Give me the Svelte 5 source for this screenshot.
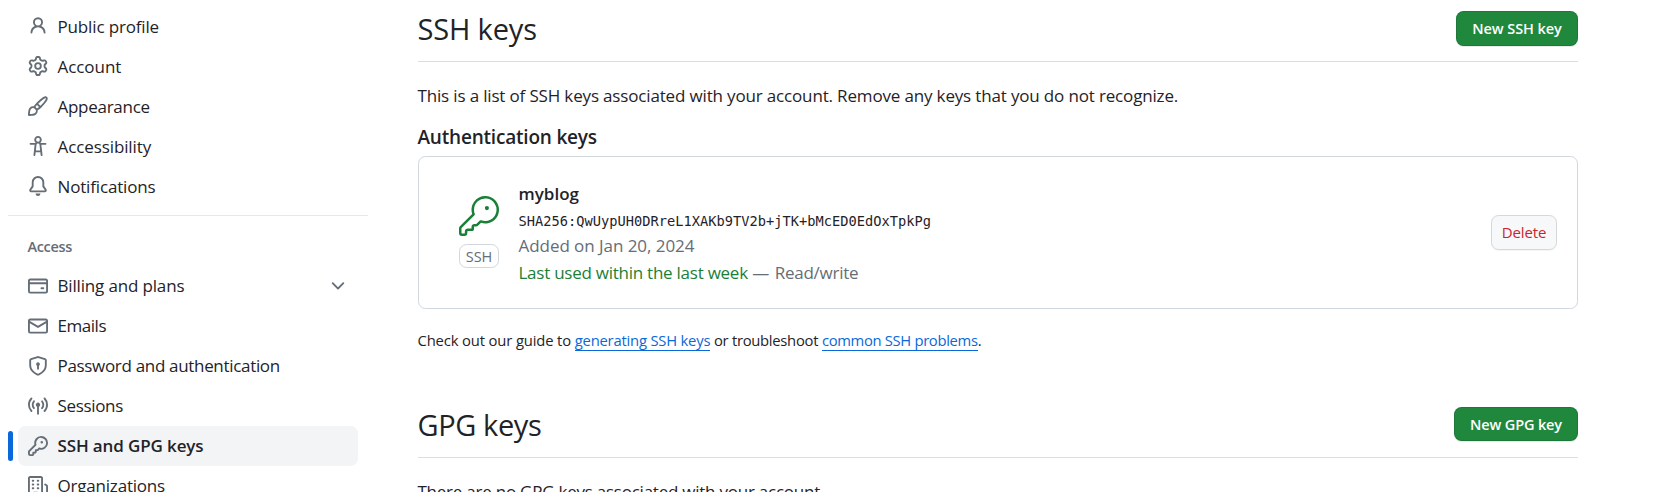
<script>
  const icons = {
    person: 'M10.561 8.073a6.005 6.005 0 0 1 3.432 5.142.75.75 0 1 1-1.498.07 4.5 4.5 0 0 0-8.99 0 .75.75 0 0 1-1.498-.07 6.004 6.004 0 0 1 3.431-5.142 3.999 3.999 0 1 1 5.123 0ZM10.5 5a2.5 2.5 0 1 0-5 0 2.5 2.5 0 0 0 5 0Z',
    gear: 'M8 0a8.2 8.2 0 0 1 .701.031C9.444.095 9.99.645 10.16 1.29l.288 1.107c.018.066.079.158.212.224.231.114.454.243.668.386.123.082.233.09.299.071l1.103-.303c.644-.176 1.392.021 1.82.63.27.385.506.792.704 1.218.315.675.111 1.422-.364 1.891l-.814.806c-.049.048-.098.147-.088.294.016.257.016.515 0 .772-.01.147.038.246.088.294l.814.806c.475.469.679 1.216.364 1.891a7.977 7.977 0 0 1-.704 1.217c-.428.61-1.176.807-1.82.63l-1.102-.302c-.067-.019-.177-.011-.3.071a5.909 5.909 0 0 1-.668.386c-.133.066-.194.158-.211.224l-.29 1.106c-.168.646-.715 1.196-1.458 1.26a8.006 8.006 0 0 1-1.402 0c-.743-.064-1.289-.614-1.458-1.26l-.289-1.106c-.018-.066-.079-.158-.212-.224a5.738 5.738 0 0 1-.668-.386c-.123-.082-.233-.09-.299-.071l-1.103.303c-.644.176-1.392-.021-1.82-.63a8.12 8.12 0 0 1-.704-1.218c-.315-.675-.111-1.422.363-1.891l.815-.806c.05-.048.098-.147.088-.294a6.214 6.214 0 0 1 0-.772c.01-.147-.038-.246-.088-.294l-.815-.806C.635 6.045.431 5.298.746 4.623a7.92 7.92 0 0 1 .704-1.217c.428-.61 1.176-.807 1.82-.63l1.102.302c.067.019.177.011.3-.071.214-.143.437-.272.668-.386.133-.066.194-.158.211-.224l.29-1.106C6.009.645 6.556.095 7.299.03 7.53.01 7.764 0 8 0Zm-.571 1.525c-.036.003-.108.036-.137.146l-.289 1.105c-.147.561-.549.967-.998 1.189-.173.086-.34.183-.5.29-.417.278-.97.423-1.529.27l-1.103-.303c-.109-.03-.175.016-.195.045-.22.312-.412.644-.573.99-.014.031-.021.11.059.19l.815.806c.411.406.562.957.53 1.456a4.709 4.709 0 0 0 0 .582c.032.499-.119 1.05-.53 1.456l-.815.806c-.081.08-.073.159-.059.19.162.346.353.677.573.989.02.03.085.076.195.046l1.102-.303c.56-.153 1.113-.008 1.53.27.161.107.328.204.501.29.447.222.85.629.997 1.189l.289 1.105c.029.109.101.143.137.146a6.6 6.6 0 0 0 1.142 0c.036-.003.108-.036.137-.146l.289-1.105c.147-.561.549-.967.998-1.189.173-.086.34-.183.5-.29.417-.278.97-.423 1.529-.27l1.103.303c.109.029.175-.016.195-.045.22-.313.411-.644.573-.99.014-.031.021-.11-.059-.19l-.815-.806c-.411-.406-.562-.957-.53-1.456a4.709 4.709 0 0 0 0-.582c-.032-.499.119-1.05.53-1.456l.815-.806c.081-.08.073-.159.059-.19a6.464 6.464 0 0 0-.573-.989c-.02-.03-.085-.076-.195-.046l-1.102.303c-.56.153-1.113.008-1.53-.27a4.44 4.44 0 0 0-.501-.29c-.447-.222-.85-.629-.997-1.189l-.289-1.105c-.029-.11-.101-.143-.137-.146a6.6 6.6 0 0 0-1.142 0ZM11 8a3 3 0 1 1-6 0 3 3 0 0 1 6 0ZM9.5 8a1.5 1.5 0 1 0-3.001.001A1.5 1.5 0 0 0 9.5 8Z',
    paintbrush: 'M11.134 1.535c.7-.509 1.416-.942 2.076-1.155.649-.21 1.463-.267 2.069.34.603.601.568 1.411.368 2.07-.202.668-.624 1.39-1.125 2.096-1.011 1.424-2.496 2.987-3.775 4.249-1.098 1.084-2.132 1.839-3.04 2.3a3.744 3.744 0 0 1-1.055 3.217c-.431.431-1.065.691-1.657.861-.614.177-1.294.287-1.914.357A21.151 21.151 0 0 1 .797 16H.743l.007-.75H.749L.742 16a.75.75 0 0 1-.743-.742l.743-.008-.742.007v-.054a21.25 21.25 0 0 1 .13-2.284c.067-.647.187-1.287.358-1.914.17-.591.43-1.226.86-1.657a3.746 3.746 0 0 1 3.227-1.054c.466-.893 1.225-1.907 2.314-2.982 1.271-1.255 2.833-2.75 4.245-3.777ZM1.62 13.089c-.051.464-.086.929-.104 1.395.466-.018.932-.053 1.396-.104a10.511 10.511 0 0 0 1.668-.309c.526-.151.856-.325 1.011-.48a2.25 2.25 0 1 0-3.182-3.182c-.155.155-.329.485-.48 1.01a10.515 10.515 0 0 0-.309 1.67Zm10.396-10.34c-1.224.89-2.605 2.189-3.822 3.384l1.718 1.718c1.21-1.205 2.51-2.597 3.387-3.833.47-.662.78-1.227.912-1.662.134-.444.032-.551.009-.575h-.001V1.78c-.014-.014-.113-.113-.548.027-.432.14-.995.462-1.655.942Zm-4.832 7.266-.001.001a9.859 9.859 0 0 0 1.63-1.142L7.155 7.216a9.7 9.7 0 0 0-1.161 1.607c.482.302.889.71 1.19 1.192Z',
    accessibility: 'M9.923 5.302c.063.063.122.129.178.198H14A.75.75 0 0 1 14 7h-3.3l.578 5.163.362 2.997a.75.75 0 0 1-1.49.18L9.868 13H6.132l-.282 2.34a.75.75 0 0 1-1.49-.18l.362-2.997L5.3 7H2a.75.75 0 0 1 0-1.5h3.9a2.54 2.54 0 0 1 .176-.198 3 3 0 1 1 3.847 0ZM9.2 7.073h-.001a1.206 1.206 0 0 0-2.398 0L6.305 11.5h3.39ZM9.5 3a1.5 1.5 0 1 0-3.001.001A1.5 1.5 0 0 0 9.5 3Z',
    bell: 'M8 16a2 2 0 0 0 1.985-1.75c.017-.137-.097-.25-.235-.25h-3.5c-.138 0-.252.113-.235.25A2 2 0 0 0 8 16ZM3 5a5 5 0 0 1 10 0v2.947c0 .05.015.098.042.139l1.703 2.555A1.519 1.519 0 0 1 13.482 13H2.518a1.516 1.516 0 0 1-1.263-2.36l1.703-2.554A.255.255 0 0 0 3 7.947Zm5-3.5A3.5 3.5 0 0 0 4.5 5v2.947c0 .346-.102.683-.294.97l-1.703 2.556a.017.017 0 0 0-.003.01l.001.006c0 .002.002.004.004.006l.006.004.007.001h10.964l.007-.001.006-.004.004-.006.001-.007a.017.017 0 0 0-.003-.01l-1.703-2.554a1.745 1.745 0 0 1-.294-.97V5A3.5 3.5 0 0 0 8 1.5Z',
    card: 'M10.75 9a.75.75 0 0 0 0 1.5h1.5a.75.75 0 0 0 0-1.5h-1.5Z M0 3.75C0 2.784.784 2 1.75 2h12.5c.966 0 1.75.784 1.75 1.75v8.5A1.75 1.75 0 0 1 14.25 14H1.75A1.75 1.75 0 0 1 0 12.25ZM14.5 6.5h-13v5.75c0 .138.112.25.25.25h12.5a.25.25 0 0 0 .25-.25Zm0-2.75a.25.25 0 0 0-.25-.25H1.75a.25.25 0 0 0-.25.25V5h13Z',
    mail: 'M1.75 2h12.5c.966 0 1.75.784 1.75 1.75v8.5A1.75 1.75 0 0 1 14.25 14H1.75A1.75 1.75 0 0 1 0 12.25v-8.5C0 2.784.784 2 1.75 2ZM1.5 12.251c0 .138.112.25.25.25h12.5a.25.25 0 0 0 .25-.25V5.809L8.38 9.397a.75.75 0 0 1-.76 0L1.5 5.809v6.442Zm13-8.181v-.32a.25.25 0 0 0-.25-.25H1.75a.25.25 0 0 0-.25.25v.32L8 7.88Z',
    shield: 'm8.533.133 5.25 1.68A1.75 1.75 0 0 1 15 3.48V7c0 1.566-.32 3.182-1.303 4.682-.983 1.498-2.585 2.813-5.032 3.855a1.697 1.697 0 0 1-1.33 0c-2.447-1.042-4.049-2.357-5.032-3.855C1.32 10.182 1 8.566 1 7V3.48a1.75 1.75 0 0 1 1.217-1.667l5.25-1.68a1.748 1.748 0 0 1 1.066 0Zm-.61 1.429.001.001-5.25 1.68a.251.251 0 0 0-.174.237V7c0 1.36.275 2.666 1.057 3.859.784 1.194 2.121 2.342 4.366 3.298a.196.196 0 0 0 .154 0c2.245-.957 3.582-2.103 4.366-3.297C13.225 9.666 13.5 8.358 13.5 7V3.48a.25.25 0 0 0-.174-.238l-5.25-1.68a.25.25 0 0 0-.153 0ZM9.5 6.5c0 .536-.286 1.032-.75 1.3v2.45a.75.75 0 0 1-1.5 0V7.8A1.5 1.5 0 1 1 9.5 6.5Z',
    broadcast: 'M8.75 8.582v5.668a.75.75 0 0 1-1.5 0V8.582a1.75 1.75 0 1 1 1.5 0Zm3.983-7.125a.75.75 0 0 1 1.06.026A7.976 7.976 0 0 1 16 7c0 2.139-.84 4.083-2.207 5.517a.75.75 0 1 1-1.086-1.034A6.474 6.474 0 0 0 14.5 7a6.474 6.474 0 0 0-1.793-4.483.75.75 0 0 1 .026-1.06Zm-9.466 0c.3.286.312.76.026 1.06A6.474 6.474 0 0 0 1.5 7a6.47 6.47 0 0 0 1.793 4.483.75.75 0 0 1-1.086 1.034A7.973 7.973 0 0 1 0 7c0-2.139.84-4.083 2.207-5.517a.75.75 0 0 1 1.06-.026Zm8.556 2.321A4.988 4.988 0 0 1 13 7a4.988 4.988 0 0 1-1.177 3.222.75.75 0 1 1-1.146-.967A3.487 3.487 0 0 0 11.5 7c0-.86-.309-1.645-.823-2.255a.75.75 0 0 1 1.146-.967Zm-6.492.958A3.48 3.48 0 0 0 4.5 7a3.48 3.48 0 0 0 .823 2.255.75.75 0 0 1-1.146.967A4.981 4.981 0 0 1 3 7a4.982 4.982 0 0 1 1.188-3.236.75.75 0 1 1 1.143.972Z',
    key: 'M10.5 0a5.499 5.499 0 1 1-1.288 10.848l-.932.932a.749.749 0 0 1-.53.22H7v.75a.749.749 0 0 1-.22.53l-.5.5a.749.749 0 0 1-.53.22H5v.75a.749.749 0 0 1-.22.53l-.5.5a.749.749 0 0 1-.53.22h-2A1.75 1.75 0 0 1 0 14.25v-2c0-.199.079-.389.22-.53l4.932-4.932A5.5 5.5 0 0 1 10.5 0Zm-4 5.5c-.001.431.069.86.205 1.269a.75.75 0 0 1-.181.768L1.5 12.56v1.69c0 .138.112.25.25.25h1.69l.06-.06v-1.19a.75.75 0 0 1 .75-.75h1.19l.06-.06v-1.19a.75.75 0 0 1 .75-.75h1.19l1.023-1.025a.75.75 0 0 1 .768-.18A4 4 0 1 0 6.5 5.5ZM11 6a1 1 0 1 1 0-2 1 1 0 0 1 0 2Z',
    key24: 'M16.75 8.5a1.25 1.25 0 1 0 0-2.5 1.25 1.25 0 0 0 0 2.5Z M15.75 0a8.25 8.25 0 1 1-2.541 16.101l-1.636 1.636a1.744 1.744 0 0 1-1.237.513H9.25a.25.25 0 0 0-.25.25v1.448a.876.876 0 0 1-.256.619l-.214.213a.75.75 0 0 1-.545.22H5.25a.25.25 0 0 0-.25.25v1A1.75 1.75 0 0 1 3.25 24h-1.5A1.75 1.75 0 0 1 0 22.25v-2.836c0-.464.185-.908.513-1.236l7.386-7.388A8.249 8.249 0 0 1 15.75 0ZM9 8.25a6.733 6.733 0 0 0 .463 2.462.75.75 0 0 1-.168.804l-7.722 7.721a.25.25 0 0 0-.073.177v2.836c0 .138.112.25.25.25h1.5a.25.25 0 0 0 .25-.25v-1c0-.966.784-1.75 1.75-1.75H7.5v-1c0-.966.784-1.75 1.75-1.75h1.086a.25.25 0 0 0 .177-.073l1.971-1.972a.75.75 0 0 1 .804-.168A6.75 6.75 0 1 0 9 8.25Z',
    organization: 'M1.75 16A1.75 1.75 0 0 1 0 14.25V1.75C0 .784.784 0 1.75 0h8.5C11.216 0 12 .784 12 1.75v12.5c0 .085-.006.168-.018.25h2.268a.25.25 0 0 0 .25-.25V8.285a.25.25 0 0 0-.111-.208l-1.055-.703a.749.749 0 1 1 .832-1.248l1.055.703c.487.325.779.871.779 1.456v5.965A1.75 1.75 0 0 1 14.25 16h-3.5a.766.766 0 0 1-.197-.026c-.099.017-.2.026-.303.026h-3a.75.75 0 0 1-.75-.75V14h-1v1.25a.75.75 0 0 1-.75.75Zm-.25-1.75c0 .138.112.25.25.25H4v-1.25a.75.75 0 0 1 .75-.75h2.5a.75.75 0 0 1 .75.75v1.25h2.25a.25.25 0 0 0 .25-.25V1.75a.25.25 0 0 0-.25-.25h-8.5a.25.25 0 0 0-.25.25ZM3.75 6h.5a.75.75 0 0 1 0 1.5h-.5a.75.75 0 0 1 0-1.5ZM3 3.75A.75.75 0 0 1 3.75 3h.5a.75.75 0 0 1 0 1.5h-.5A.75.75 0 0 1 3 3.75Zm4 3A.75.75 0 0 1 7.75 6h.5a.75.75 0 0 1 0 1.5h-.5A.75.75 0 0 1 7 6.75ZM7.75 3h.5a.75.75 0 0 1 0 1.5h-.5a.75.75 0 0 1 0-1.5ZM3 9.75A.75.75 0 0 1 3.75 9h.5a.75.75 0 0 1 0 1.5h-.5A.75.75 0 0 1 3 9.75ZM7.75 9h.5a.75.75 0 0 1 0 1.5h-.5a.75.75 0 0 1 0-1.5Z',
    chevron: 'M12.78 5.22a.749.749 0 0 1 0 1.06l-4.25 4.25a.749.749 0 0 1-1.06 0L3.22 6.28a.749.749 0 1 1 1.06-1.06L8 8.939l3.72-3.719a.749.749 0 0 1 1.06 0Z'
  };

  // `track` is the letter spacing of a label, in px.
  const profile = [
    { label: 'Public profile', icon: 'person', track: -0.15 },
    { label: 'Account', icon: 'gear', track: -0.06 },
    { label: 'Appearance', icon: 'paintbrush', track: -0.27 },
    { label: 'Accessibility', icon: 'accessibility', track: -0.1 },
    { label: 'Notifications', icon: 'bell', track: -0.16 }
  ];
  const access = [
    { label: 'Billing and plans', icon: 'card', track: -0.16, expandable: true },
    { label: 'Emails', icon: 'mail', track: -0.45 },
    { label: 'Password and authentication', icon: 'shield', track: -0.32 },
    { label: 'Sessions', icon: 'broadcast', track: -0.34 },
    { label: 'SSH and GPG keys', icon: 'key', track: -0.13, current: true },
    { label: 'Organizations', icon: 'organization', track: -0.2 }
  ];
</script>

{#snippet icon(name)}
  <svg class="icon" viewBox="0 0 16 16" aria-hidden="true"><path d={icons[name]} /></svg>
{/snippet}

{#snippet navList(items)}
  <ul>
    {#each items as item}
      <li class:current={item.current}>
        {@render icon(item.icon)}
        <span class="label" style="letter-spacing: {item.track}px">{item.label}</span>
        {#if item.expandable}{@render icon('chevron')}{/if}
      </li>
    {/each}
  </ul>
{/snippet}

<div class="page">
  <nav>
    <div class="profile">{@render navList(profile)}</div>
    <hr />
    <h3>Access</h3>
    {@render navList(access)}
  </nav>

  <main>
    <header>
      <h2>SSH keys</h2>
      <button class="primary ssh-new">New SSH key</button>
    </header>
    <p class="intro">This is a list of SSH keys associated with your account. Remove any keys that you do not recognize.</p>
    <h4>Authentication keys</h4>

    <section class="key-box">
      <div class="key-kind">
        <svg class="key-icon" viewBox="0 0 24 24" aria-hidden="true"><path d={icons.key24} /></svg>
        <span class="tag">SSH</span>
      </div>
      <div class="details">
        <strong>myblog</strong>
        <code>SHA256:QwUypUH0DRreL1XAKb9TV2b+jTK+bMcED0EdOxTpkPg</code>
        <span class="added">Added on Jan 20, 2024</span>
        <span class="usage"><span class="used">Last used within the last week</span> <span class="dash">—</span> <span class="scope">Read/write</span></span>
      </div>
      <button class="danger">Delete</button>
    </section>

    <p class="guide">Check out our guide to <a class="generating" href="#generating">generating SSH keys</a> <span class="or">or troubleshoot</span> <a class="common" href="#problems">common SSH problems</a>.</p>

    <header class="gpg">
      <h2 class="gpg-title">GPG keys</h2>
      <button class="primary gpg-new">New GPG key</button>
    </header>
    <p class="empty">There are no GPG keys associated with your account.</p>
  </main>
</div>

<style>
  :global(body) {
    overflow: hidden;
    background: #fff;
  }
  .page {
    display: flex;
    height: 492px;
    overflow: hidden;
    color: #1f2328;
    font: 17px/26px "Open Sans", "Noto Sans", sans-serif;
    white-space: nowrap;
  }
  h2, h3, h4, p, ul {
    margin: 0;
    padding: 0;
    font-weight: 400;
  }
  nav {
    flex: none;
    width: 360px;
    padding: 6px 0 0 8px;
  }
  ul {
    list-style: none;
  }
  li {
    position: relative;
    display: flex;
    align-items: center;
    height: 40px;
    margin: 0 10px;
    padding: 0 10px;
    border-radius: 7.5px;
    box-sizing: border-box;
  }
  .icon {
    flex: none;
    width: 20px;
    height: 20px;
    fill: #656d76;
  }
  .label {
    flex: 1;
    margin-left: 9.5px;
  }
  .profile .label {
    padding-top: 2px;
  }
  .current {
    background: #f3f4f6;
    font-weight: 600;
  }
  .current::before {
    content: "";
    position: absolute;
    left: -10px;
    top: 5px;
    width: 5px;
    height: 30px;
    border-radius: 7.5px;
    background: #0969da;
  }
  hr {
    height: 1px;
    margin: 9px 0 0;
    border: 0;
    background: #e5e8eb;
  }
  h3 {
    height: 50px;
    padding: 18px 20px 0 19.5px;
    box-sizing: border-box;
    color: #656d76;
    font-size: 14.5px;
    line-height: 26px;
    font-weight: 600;
    letter-spacing: -0.35px;
  }
  main {
    flex: none;
    width: 1160px;
    margin-left: 50px;
  }
  header {
    display: flex;
    justify-content: space-between;
    align-items: flex-start;
    height: 62px;
    padding-top: 11px;
    border-bottom: 1px solid #d8dee4;
    box-sizing: border-box;
  }
  h2 {
    margin-left: -0.5px;
    font-size: 29px;
    line-height: 35px;
    letter-spacing: -0.15px;
  }
  .gpg-title {
    letter-spacing: -0.4px;
  }
  button {
    height: 35px;
    padding: 0;
    border: 1px solid rgba(31, 35, 40, 0.15);
    border-radius: 7.5px;
    box-sizing: border-box;
    font: 600 14.5px/30px "Open Sans", "Noto Sans", sans-serif;
  }
  .primary {
    background: #1f883d;
    color: #fff;
    box-shadow: 0 1px 0 rgba(31, 35, 40, 0.1);
  }
  .ssh-new {
    width: 122px;
    letter-spacing: -0.07px;
  }
  .gpg-new {
    width: 124px;
    height: 34px;
    padding-top: 2px;
    letter-spacing: -0.15px;
  }
  .intro {
    margin: 21px 0 0 -0.5px;
    letter-spacing: -0.16px;
  }
  h4 {
    margin: 14px 0 0 -0.5px;
    font-size: 19px;
    line-height: 28px;
    font-weight: 600;
    letter-spacing: -0.2px;
  }
  .key-box {
    display: flex;
    align-items: center;
    height: 153px;
    margin-top: 5px;
    padding: 0 20px 0 40px;
    border: 1px solid #d0d7de;
    border-radius: 7.5px;
    box-sizing: border-box;
  }
  .key-kind {
    display: flex;
    flex-direction: column;
    width: 40px;
    padding-bottom: 2px;
  }
  .key-icon {
    width: 40px;
    height: 40px;
    fill: #1a7f37;
  }
  .tag {
    height: 24px;
    margin-top: 8px;
    border: 1px solid #d0d7de;
    border-radius: 7.5px;
    box-sizing: border-box;
    color: #656d76;
    font-size: 14.5px;
    line-height: 23px;
    text-align: center;
    letter-spacing: -0.1px;
  }
  .details {
    display: flex;
    flex: 1;
    flex-direction: column;
    margin-left: 19.5px;
    padding-top: 2px;
    color: #656d76;
  }
  .details strong {
    color: #1f2328;
    font-weight: 600;
    line-height: 26px;
  }
  .details code {
    margin: 1px 0 -1px;
    color: #1f2328;
    font: 13.68px/27px "DejaVu Sans Mono", monospace;
    letter-spacing: 0.02px;
  }
  .added {
    line-height: 24px;
    letter-spacing: -0.05px;
  }
  .usage {
    line-height: 29px;
  }
  .used {
    color: #1a7f37;
    letter-spacing: -0.25px;
  }
  .dash {
    display: inline-block;
    width: 18px;
  }
  .scope {
    letter-spacing: -0.25px;
  }
  .danger {
    width: 66px;
    padding-bottom: 2px;
    border-color: #d5d8da;
    background: #f6f8fa;
    color: #cf222e;
    font-weight: 400;
    font-size: 15px;
    letter-spacing: -0.15px;
    box-shadow: 0 1px 0 rgba(31, 35, 40, 0.04);
  }
  .guide {
    margin: 19px 0 0 -0.5px;
    font-size: 14.8px;
    line-height: 24px;
    letter-spacing: -0.14px;
  }
  a {
    border-bottom: 1px solid #0969da;
    color: #0969da;
    text-decoration: none;
  }
  .generating {
    letter-spacing: -0.21px;
  }
  .or {
    letter-spacing: -0.28px;
  }
  .common {
    letter-spacing: -0.33px;
  }
  .gpg {
    height: 51px;
    margin-top: 55px;
    padding-top: 0;
  }
  .empty {
    margin: 21px 0 0 -0.5px;
    letter-spacing: -0.24px;
  }
</style>
